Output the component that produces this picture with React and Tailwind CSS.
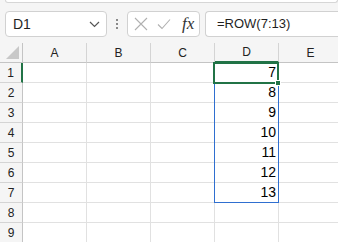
import React from "react";

const cols = ["A", "B", "C", "D", "E"];
const rows = [1, 2, 3, 4, 5, 6, 7, 8, 9];
const values = { 1: 7, 2: 8, 3: 9, 4: 10, 5: 11, 6: 12, 7: 13 };

export default function App() {
  return (
    <div
      className="w-[338px] h-[242px] overflow-hidden bg-[#f5f5f5] relative"
      style={{ fontFamily: '"Liberation Sans", Arial, sans-serif' }}
    >
      {/* ribbon bottom edge */}
      <div className="ml-[5px] h-[3px] bg-white border-x border-b border-[#d6d6d6] rounded-b-[4px]" />

      {/* formula bar */}
      <div className="flex items-center pt-[8px] h-[40px] pb-[6px]">
        <div className="ml-[5px] w-[102px] h-[26px] bg-white border border-[#d1d1d1] rounded-[4px] flex items-center pl-[7px] pr-[6px]">
          <span className="text-[14px] text-[#1f1f1f] flex-1">D1</span>
          <svg width="11" height="7" viewBox="0 0 11 7" className="mt-[1px]">
            <path d="M1 1 L5.5 5.5 L10 1" fill="none" stroke="#555" strokeWidth="1.2" />
          </svg>
        </div>
        <div className="w-[20px] flex flex-col items-center gap-[2px]">
          <div className="w-[2px] h-[2px] bg-[#8a8a8a]" />
          <div className="w-[2px] h-[2px] bg-[#8a8a8a]" />
          <div className="w-[2px] h-[2px] bg-[#8a8a8a]" />
        </div>
        <div className="w-[73px] h-[26px] bg-white border border-[#d1d1d1] rounded-[4px] flex items-center pl-[6px]">
          <svg width="14" height="14" viewBox="0 0 14 14">
            <path d="M1 1 L13 13 M13 1 L1 13" fill="none" stroke="#b0b0b0" strokeWidth="1.1" />
          </svg>
          <svg width="14" height="12" viewBox="0 0 14 12" className="ml-[9px]">
            <path d="M1 6.5 L5 10.5 L13 1.5" fill="none" stroke="#b0b0b0" strokeWidth="1.1" />
          </svg>
          <span
            className="ml-[11px] text-[17px] italic text-[#333]"
            style={{ fontFamily: '"Liberation Serif", "Times New Roman", serif' }}
          >
            fx
          </span>
        </div>
        <div className="ml-[5px] flex-1 h-[26px] bg-white border-y border-l border-[#d1d1d1] rounded-l-[4px] flex items-center pl-[11px]">
          <span className="text-[13px] text-[#1f1f1f]">=ROW(7:13)</span>
        </div>
      </div>

      {/* grid */}
      <div className="relative bg-white">
        <div className="grid grid-cols-[23px_repeat(5,64px)] grid-rows-[20px_repeat(9,20px)]">
          {/* corner */}
          <div className="bg-[#f5f5f5] border-r border-b border-[#c4c4c4] relative">
            <svg width="14" height="14" viewBox="0 0 14 14" className="absolute right-[2px] bottom-[2px]">
              <path d="M13 0 L13 13 L0 13 Z" fill="#c8c8c8" />
            </svg>
          </div>
          {cols.map((c) => (
            <div
              key={c}
              className={
                c === "D"
                  ? "bg-[#f5f5f5] border-r border-[#d4d4d4] border-b-2 border-b-[#217346] flex items-center justify-center text-[12px] text-[#222]"
                  : "bg-[#f5f5f5] border-r border-[#d4d4d4] border-b border-b-[#c4c4c4] flex items-center justify-center text-[12px] text-[#222]"
              }
            >
              {c}
            </div>
          ))}
          {rows.map((r) => (
            <React.Fragment key={r}>
              <div
                className={
                  r === 1
                    ? "bg-[#f5f5f5] border-b border-[#d4d4d4] border-r-2 border-r-[#217346] flex items-center justify-center text-[12px] text-[#222]"
                    : "bg-[#f5f5f5] border-b border-[#d4d4d4] border-r border-r-[#c4c4c4] flex items-center justify-center text-[12px] text-[#222]"
                }
              >
                {r}
              </div>
              {cols.map((c) => (
                <div
                  key={c}
                  className="border-r border-b border-[#e1e1e1] flex items-center justify-end pr-[2px] text-[14px] text-black"
                >
                  {c === "D" && values[r] !== undefined ? values[r] : ""}
                </div>
              ))}
            </React.Fragment>
          ))}
        </div>

        {/* blue range D2:D7 */}
        <div className="absolute left-[214px] top-[40px] w-[65px] h-[120px] border border-[#2f6fd0]" />
        {/* green active cell D1 */}
        <div className="absolute left-[213px] top-[19px] w-[66px] h-[22px] border-2 border-[#217346]" />
        <div className="absolute left-[275px] top-[37px] w-[6px] h-[6px] bg-[#217346] border border-white" />
      </div>
    </div>
  );
}
